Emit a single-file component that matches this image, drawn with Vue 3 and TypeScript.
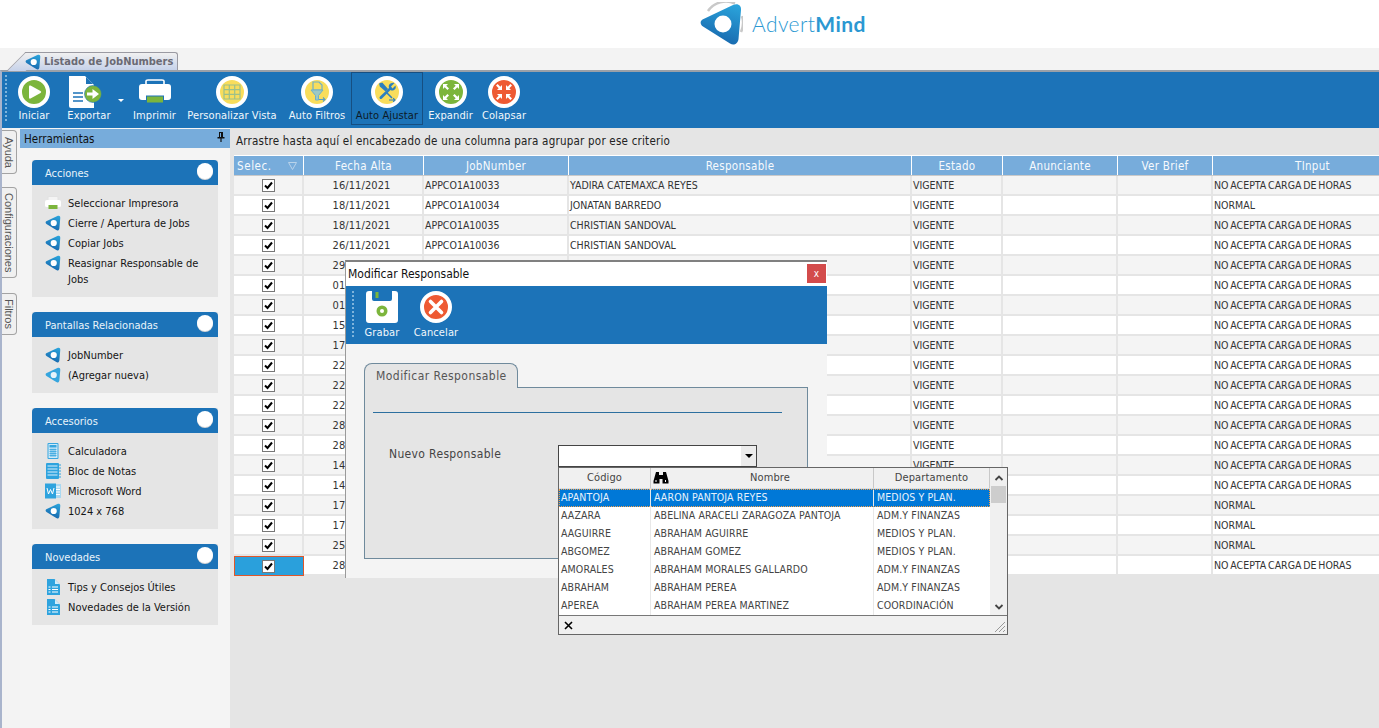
<script setup lang="ts">
interface Tool { label: string; icon: string; width: number; active?: boolean; caret?: boolean }
interface SideItem { label: string; icon: string }
interface Card { title: string; items: SideItem[] }
interface Row { date: string; job: string; resp: string; estado: string; input: string }

const tools: Tool[] = [
  { label: 'Iniciar', icon: 'play', width: 42 },
  { label: 'Exportar', icon: 'export', width: 72, caret: true },
  { label: 'Imprimir', icon: 'printer', width: 51 },
  { label: 'Personalizar Vista', icon: 'grid', width: 102 },
  { label: 'Auto Filtros', icon: 'filter', width: 66 },
  { label: 'Auto Ajustar', icon: 'tools', width: 72, active: true },
  { label: 'Expandir', icon: 'expand', width: 53 },
  { label: 'Colapsar', icon: 'collapse', width: 52 }
]

const cards: Card[] = [
  { title: 'Acciones', items: [
    { label: 'Seleccionar Impresora', icon: 'printer-s' },
    { label: 'Cierre / Apertura de Jobs', icon: 'logo' },
    { label: 'Copiar Jobs', icon: 'logo' },
    { label: 'Reasignar Responsable de Jobs', icon: 'logo' }
  ] },
  { title: 'Pantallas Relacionadas', items: [
    { label: 'JobNumber', icon: 'logo' },
    { label: '(Agregar nueva)', icon: 'logo-light' }
  ] },
  { title: 'Accesorios', items: [
    { label: 'Calculadora', icon: 'calc' },
    { label: 'Bloc de Notas', icon: 'notes' },
    { label: 'Microsoft Word', icon: 'word' },
    { label: '1024 x 768', icon: 'logo' }
  ] },
  { title: 'Novedades', items: [
    { label: 'Tips y Consejos Útiles', icon: 'doc' },
    { label: 'Novedades de la Versión', icon: 'doc' }
  ] }
]

const columns: { label: string; cls: string }[] = [
  { label: 'Fecha Alta', cls: 'c-date' },
  { label: 'JobNumber', cls: 'c-job' },
  { label: 'Responsable', cls: 'c-resp' },
  { label: 'Estado', cls: 'c-state' },
  { label: 'Anunciante', cls: 'c-adv' },
  { label: 'Ver Brief', cls: 'c-brief' },
  { label: 'TInput', cls: 'c-input' }
]

const NO = 'NO ACEPTA CARGA DE HORAS'
const dates = ['16/11/2021','18/11/2021','18/11/2021','26/11/2021','29/11/2021','01/12/2021','01/12/2021','15/12/2021','17/12/2021','22/12/2021','22/12/2021','22/12/2021','28/12/2021','28/12/2021','14/01/2022','14/01/2022','17/01/2022','17/01/2022','25/01/2022','28/01/2022']
const resp = ['YADIRA CATEMAXCA REYES','JONATAN BARREDO','CHRISTIAN SANDOVAL','CHRISTIAN SANDOVAL']
const jobs = ['APPCO1A10033','APPCO1A10034','APPCO1A10035','APPCO1A10036']
const normal = [1, 16, 17, 18]
const rows: Row[] = dates.map((date, i) => ({
  date,
  job: jobs[i] ?? '',
  resp: resp[i] ?? '',
  estado: i < 15 ? 'VIGENTE' : '',
  input: normal.includes(i) ? 'NORMAL' : NO
}))

const people: [string, string, string][] = [
  ['APANTOJA', 'AARON PANTOJA REYES', 'MEDIOS Y PLAN.'],
  ['AAZARA', 'ABELINA ARACELI ZARAGOZA PANTOJA', 'ADM.Y FINANZAS'],
  ['AAGUIRRE', 'ABRAHAM AGUIRRE', 'MEDIOS Y PLAN.'],
  ['ABGOMEZ', 'ABRAHAM GOMEZ', 'MEDIOS Y PLAN.'],
  ['AMORALES', 'ABRAHAM MORALES GALLARDO', 'ADM.Y FINANZAS'],
  ['ABRAHAM', 'ABRAHAM PEREA', 'ADM.Y FINANZAS'],
  ['APEREA', 'ABRAHAM PEREA MARTINEZ', 'COORDINACIÓN']
]
</script>

<template>
  <div class="app">
    <svg class="defs" width="0" height="0" aria-hidden="true">
      <defs>
        <linearGradient id="lg" x1="0.7" y1="0" x2="0.4" y2="1">
          <stop offset="0" stop-color="#2aa2da" />
          <stop offset="1" stop-color="#1766ac" />
        </linearGradient>
      </defs>
      <symbol id="logo" viewBox="0 0 44 44">
        <path d="M3.5 17.5 L34 3 C39 1 42.5 3.5 42 8 L39.5 37 C39 42 34.5 44 31 41.5 L4 24.5 C1 22.5 1 19 3.5 17.5Z" fill="url(#lg)" />
        <circle cx="24" cy="22" r="8.5" fill="#fff" />
      </symbol>
      <symbol id="logo-light" viewBox="0 0 44 44">
        <path d="M3.5 17.5 L34 3 C39 1 42.5 3.5 42 8 L39.5 37 C39 42 34.5 44 31 41.5 L4 24.5 C1 22.5 1 19 3.5 17.5Z" fill="#35a5de" />
        <circle cx="24" cy="22" r="8.5" fill="#e5f3fb" />
      </symbol>
      <symbol id="play" viewBox="0 0 32 32">
        <circle cx="16" cy="16" r="14" fill="#7cb53c" stroke="#fff" stroke-width="4" />
        <path d="M12.5 9.5 L22.5 15 Q24 16 22.5 17 L12.5 22.5 Q11 23 11 21.5 V10.5 Q11 9 12.5 9.5Z" fill="#fff" />
      </symbol>
      <symbol id="export" viewBox="0 0 34 32">
        <path d="M1 0 H17 L26 9 V32 H3 Q1 32 1 30Z" fill="#fff" />
        <path d="M18 1 V8 H25Z" fill="#1c73b8" />
        <path d="M5 17 H15 M5 21 H15 M5 25 H15" stroke="#1c73b8" stroke-width="1.3" />
        <circle cx="25" cy="18" r="8.5" fill="#7cb53c" stroke="#1c73b8" stroke-width="0.6" />
        <path d="M19 16.5 H24.5 V13 L31 18 L24.5 23 V19.5 H19Z" fill="#fff" />
      </symbol>
      <symbol id="printer" viewBox="0 0 32 32">
        <path d="M7 8 V5 Q7 4 9 4 H23 Q25 4 25 5 V8" fill="none" stroke="#fff" stroke-width="1.6" />
        <path d="M3 8 H29 Q32 8 32 11 V21 Q32 24 29 24 H3 Q0 24 0 21 V11 Q0 8 3 8Z" fill="#fff" />
        <rect x="7.5" y="20" width="17" height="7" fill="#7cb53c" stroke="#1c73b8" stroke-width="1" />
      </symbol>
      <symbol id="grid" viewBox="0 0 32 32">
        <circle cx="16" cy="16" r="14" fill="#f8dd5c" stroke="#fff" stroke-width="4" />
        <path d="M8 9 H24 V23 H8Z M8 13.7 H24 M8 18.3 H24 M13.3 9 V23 M18.7 9 V23" fill="none" stroke="#9cc08a" stroke-width="1.2" />
      </symbol>
      <symbol id="filter" viewBox="0 0 32 32">
        <circle cx="16" cy="16" r="14" fill="#f8dd5c" stroke="#fff" stroke-width="4" />
        <path d="M12 6 H18 L21 9 V14 H12Z" fill="none" stroke="#6fb0c8" stroke-width="1.2" />
        <path d="M10 14 H22 L17.5 19.5 V24 H14.5 V19.5Z" fill="#9cc9c4" stroke="#6fb0c8" stroke-width="1" />
        <path d="M18 23.5 H24 M22 21.5 L24 23.5 L22 25.5" fill="none" stroke="#5a9fc0" stroke-width="1.1" />
      </symbol>
      <symbol id="tools" viewBox="0 0 32 32">
        <circle cx="16" cy="16" r="14" fill="#f8dd5c" stroke="#fff" stroke-width="4" />
        <path d="M23.5 7 L20 10.5 L21.5 12.5 L24.5 9.5 Q25.5 12.5 23 14 Q21 15 19.5 14 L11 22.5 Q9.5 23.5 8.8 22.5 Q8 21.5 9 20.5 L18 12 Q17 9 19.5 7.5 Q21.5 6.5 23.5 7Z" fill="#2c7fbf" />
        <path d="M9 8 L11 7.5 L16 13 L14.5 14.5 L9.5 10Z M15 16 L21 22" stroke="#2c7fbf" stroke-width="1.6" fill="#2c7fbf" />
        <path d="M18 24 H24 M22.2 22.2 L24 24 L22.2 25.8" fill="none" stroke="#2c7fbf" stroke-width="1.1" />
      </symbol>
      <symbol id="expand" viewBox="0 0 32 32">
        <circle cx="16" cy="16" r="14" fill="#7cb53c" stroke="#fff" stroke-width="4" />
        <path d="M8 8 H13 L11.3 9.7 L14 12.4 L12.4 14 L9.7 11.3 L8 13Z M24 8 V13 L22.3 11.3 L19.6 14 L18 12.4 L20.7 9.7 L19 8Z M8 24 V19 L9.7 20.7 L12.4 18 L14 19.6 L11.3 22.3 L13 24Z M24 24 H19 L20.7 22.3 L18 19.6 L19.6 18 L22.3 20.7 L24 19Z" fill="#fff" />
      </symbol>
      <symbol id="collapse" viewBox="0 0 32 32">
        <circle cx="16" cy="16" r="14" fill="#ee5a33" stroke="#fff" stroke-width="4" />
        <path d="M14 14 H9 L10.7 12.3 L8 9.6 L9.6 8 L12.3 10.7 L14 9Z M18 14 V9 L19.7 10.7 L22.4 8 L24 9.6 L21.3 12.3 L23 14Z M14 18 V23 L12.3 21.3 L9.6 24 L8 22.4 L10.7 19.7 L9 18Z M18 18 H23 L21.3 19.7 L24 22.4 L22.4 24 L19.7 21.3 L18 23Z" fill="#fff" />
      </symbol>
      <symbol id="cancel" viewBox="0 0 32 32">
        <circle cx="16" cy="16" r="14" fill="#ee5a33" stroke="#fff" stroke-width="4" />
        <path d="M10.5 10.5 L21.5 21.5 M21.5 10.5 L10.5 21.5" stroke="#fff" stroke-width="3.6" stroke-linecap="round" />
      </symbol>
      <symbol id="save" viewBox="0 0 32 32">
        <path d="M3 0 H6 V8 Q6 10 8 10 H24 Q26 10 26 8 V0 H29 Q32 0 32 3 V29 Q32 32 29 32 H3 Q0 32 0 29 V3 Q0 0 3 0Z" fill="#fff" />
        <rect x="9.5" y="1" width="3" height="6" fill="#7cb53c" />
        <circle cx="16" cy="20" r="5.5" fill="#7cb53c" />
        <circle cx="16" cy="20" r="2" fill="#fff" />
      </symbol>
      <symbol id="printer-s" viewBox="0 0 16 16">
        <path d="M3 5 V2.5 Q3 1.5 4 1.5 H12 Q13 1.5 13 2.5 V5" fill="#f4f4f4" stroke="#e2e2e2" />
        <path d="M2 5 H14 Q16 5 16 7 V11 Q16 12 14 12 H2 Q0 12 0 11 V7 Q0 5 2 5Z" fill="#fff" />
        <rect x="3.5" y="10" width="9" height="4" fill="#7cb53c" />
      </symbol>
      <symbol id="calc" viewBox="0 0 16 16">
        <rect x="2.5" y="0" width="11" height="16" rx="1" fill="#37a6df" />
        <rect x="3.5" y="1" width="9" height="14" fill="#cfe9f7" />
        <rect x="4.5" y="2" width="7" height="2.5" fill="#37a6df" />
        <path d="M4.5 6.5 H11.5 M4.5 8.5 H11.5 M4.5 10.5 H11.5 M4.5 12.5 H11.5 M6 5.5 V14 M8 5.5 V14 M10 5.5 V14" stroke="#37a6df" stroke-width="0.8" />
      </symbol>
      <symbol id="notes" viewBox="0 0 16 16">
        <rect x="1" y="0" width="13" height="16" rx="1" fill="#2ea3de" />
        <path d="M2.5 3 H12.5 M2.5 6 H12.5 M2.5 9 H12.5 M2.5 12 H12.5" stroke="#d9f0fb" stroke-width="1.1" />
        <path d="M14 2 H16 M14 5 H16 M14 8 H16 M14 11 H16 M14 14 H16" stroke="#2ea3de" stroke-width="1" />
      </symbol>
      <symbol id="word" viewBox="0 0 16 16">
        <rect x="7" y="1" width="9" height="14" fill="#a9d8f1" />
        <path d="M9 4 H15 M9 6.5 H15 M9 9 H15 M9 11.5 H15" stroke="#fff" stroke-width="1" />
        <rect x="0" y="0.5" width="11" height="15" fill="#2ea3de" />
        <path d="M2 5 L3.5 11 L5.5 6.5 L7.5 11 L9 5" fill="none" stroke="#fff" stroke-width="1" />
      </symbol>
      <symbol id="doc" viewBox="0 0 16 16">
        <path d="M2 0 H9.5 L15 5.5 V16 H2Z" fill="#2ea3de" />
        <path d="M10 0.5 V5 H14.5Z" fill="#d4edfa" />
        <path d="M7 8 H13 M7 10.5 H13 M7 13 H13 M3.5 8 H5.5 M3.5 10.5 H5.5 M3.5 13 H5.5" stroke="#fff" stroke-width="1" />
      </symbol>
    </svg>

    <header class="brand">
      <svg class="brand-mark" viewBox="0 0 44 44" aria-hidden="true">
        <path d="M9 9 A22 22 0 0 1 36 1.5 M43 14 A22 22 0 0 1 42 30" fill="none" stroke="#c9c9c9" stroke-width="2.5" />
        <use href="#logo" />
      </svg>
      <span class="brand-name">Advert<b>Mind</b></span>
    </header>

    <div class="tabstrip">
      <div class="doc-tab">
        <svg class="doc-ic"><use href="#logo" /></svg>
        <span>Listado de JobNumbers</span>
      </div>
    </div>

    <div class="workspace">
      <div class="toolbar">
        <i class="grip"></i>
        <button
          v-for="t in tools"
          :key="t.label"
          class="tool"
          :class="{ active: t.active }"
          :style="{ width: t.width + 'px' }"
        >
          <span class="tool-ic">
            <svg class="ic32" :class="{ wide: t.icon === 'export' }"><use :href="'#' + t.icon" /></svg>
          </span>
          <i v-if="t.caret" class="caret"></i>
          <span class="tool-label" :class="{ shifted: t.caret }">{{ t.label }}</span>
        </button>
      </div>

      <div class="content">
        <nav class="sidetabs">
          <span class="vtab vt-a">Ayuda</span>
          <span class="vtab vt-b">Configuraciones</span>
          <span class="vtab vt-c">Filtros</span>
        </nav>

        <aside class="tools-panel">
          <div class="panel-head">
            <span>Herramientas</span>
            <svg class="pin" viewBox="0 0 8 10"><path d="M2 0 H6 V5 H7.5 V6.5 H4.6 V10 H3.4 V6.5 H0.5 V5 H2Z M3 1 V5 H4 V1Z" fill="#111" fill-rule="evenodd" /></svg>
          </div>
          <section v-for="c in cards" :key="c.title" class="card">
            <div class="card-head">
              <span class="card-title">{{ c.title }}</span>
              <i class="dot"></i>
            </div>
            <ul class="card-body">
              <li v-for="it in c.items" :key="it.label">
                <svg class="ic16"><use :href="'#' + it.icon" /></svg>
                <span>{{ it.label }}</span>
              </li>
            </ul>
          </section>
        </aside>

        <main class="grid-area">
          <div class="group-bar">Arrastre hasta aquí el encabezado de una columna para agrupar por ese criterio</div>
          <div class="grid-head">
            <div class="hc c-sel sel-head">Selec.<svg class="funnel" viewBox="0 0 9 8"><path d="M0.5 0.5 H8.5 L4.5 7.5Z" fill="none" stroke="#b9d3ea" /></svg></div>
            <div v-for="c in columns" :key="c.label" class="hc" :class="c.cls">{{ c.label }}</div>
          </div>
          <div v-for="(r, i) in rows" :key="i" class="row" :class="{ odd: i % 2 === 0 }">
            <div class="cell c-sel check-cell" :class="{ current: i === rows.length - 1 }">
              <span class="check"><svg viewBox="0 0 11 11"><path d="M2 5.5 L4.5 8 L9 2.5" fill="none" stroke="#000" stroke-width="2" /></svg></span>
            </div>
            <div class="cell c-date center">{{ r.date }}</div>
            <div class="cell c-job">{{ r.job }}</div>
            <div class="cell c-resp">{{ r.resp }}</div>
            <div class="cell c-state">{{ r.estado }}</div>
            <div class="cell c-adv"></div>
            <div class="cell c-brief"></div>
            <div class="cell c-input">{{ r.input }}</div>
          </div>
        </main>
      </div>
    </div>

    <div class="dialog">
      <div class="dlg-title">
        <span>Modificar Responsable</span>
        <button class="dlg-close">x</button>
      </div>
      <div class="dlg-toolbar">
        <i class="grip dlg-grip"></i>
        <button class="dlg-tool save-btn"><svg class="ic32"><use href="#save" /></svg><span>Grabar</span></button>
        <button class="dlg-tool"><svg class="ic32"><use href="#cancel" /></svg><span>Cancelar</span></button>
      </div>
      <div class="dlg-body">
        <div class="dlg-tab">Modificar Responsable</div>
        <div class="dlg-panel">
          <hr class="dlg-rule" />
          <div class="field">
            <label>Nuevo Responsable</label>
            <div class="combo"><span class="combo-btn"><i></i></span></div>
          </div>
        </div>
      </div>
    </div>

    <div class="popup">
      <div class="pop-main">
        <div class="pop-table">
          <div class="pop-head">
            <div class="p1">Código</div>
            <div class="p2 p2-head">
              <svg class="binoc" viewBox="0 0 16 13"><path d="M3 1 H6 V4 H10 V1 H13 L15.5 10 V12.5 H9.5 V8 H6.5 V12.5 H0.5 V10Z" fill="#000" /><path d="M3 9 V11 M12.5 9 V11" stroke="#fff" stroke-width="1" /></svg>
              <span>Nombre</span>
            </div>
            <div class="p3">Departamento</div>
          </div>
          <div v-for="(p, i) in people" :key="p[0]" class="pop-row" :class="{ picked: i === 0 }">
            <div class="p1">{{ p[0] }}</div>
            <div class="p2">{{ p[1] }}</div>
            <div class="p3">{{ p[2] }}</div>
          </div>
        </div>
        <div class="scroll">
          <svg viewBox="0 0 10 6" class="chev"><path d="M1.5 5 L5 1.5 L8.5 5" fill="none" stroke="#444" stroke-width="1.8" /></svg>
          <i class="thumb"></i>
          <svg viewBox="0 0 10 6" class="chev down"><path d="M1.5 1 L5 4.5 L8.5 1" fill="none" stroke="#444" stroke-width="1.8" /></svg>
        </div>
      </div>
      <div class="pop-foot">
        <svg class="pop-x" viewBox="0 0 9 9"><path d="M1 1 L8 8 M8 1 L1 8" stroke="#000" stroke-width="1.6" /></svg>
        <svg class="pop-grip" viewBox="0 0 12 12"><path d="M11 1 L1 11 M11 5 L5 11 M11 9 L9 11" stroke="#999" stroke-width="1" /></svg>
      </div>
    </div>
  </div>
</template>

<style>
html, body { margin: 0; height: 100%; overflow: hidden; }
</style>

<style scoped>
.app {
  position: relative;
  width: 1379px;
  height: 728px;
  overflow: hidden;
  display: flex;
  flex-direction: column;
  background: #e5e5e5;
  font-family: "DejaVu Sans", "Noto Sans", sans-serif;
  font-stretch: condensed;
  font-size: 11px;
  color: #222;
}
.defs { position: absolute; }
button { font: inherit; border: 0; background: none; padding: 0; color: inherit; }

.brand {
  height: 48px;
  flex: none;
  background: #fff;
  display: flex;
  align-items: flex-start;
  gap: 9px;
  padding-left: 699px;
  box-sizing: border-box;
}
.brand-mark { width: 44px; height: 44px; margin-top: 2px; }
.brand-name {
  font-family: "Lato", "Open Sans", sans-serif;
  font-stretch: normal;
  font-weight: 300;
  font-size: 21px;
  line-height: 47px;
  color: #2b98d2;
  letter-spacing: .4px;
}
.brand-name b { font-weight: 700; }

.tabstrip {
  height: 22px;
  flex: none;
  background: #f3f3f3;
  padding: 4px 0 0 25px;
  box-sizing: border-box;
}
.doc-tab {
  position: relative;
  width: 153px;
  height: 18px;
  display: flex;
  align-items: center;
  gap: 3px;
  box-sizing: border-box;
  border: 1px solid #9a9aa2;
  border-bottom: 0;
  border-left: 0;
  border-radius: 0 3px 0 0;
  background: linear-gradient(#f0f0f0, #c6d2ea);
  color: #6a6a74;
  font-weight: 700;
}
.doc-tab::before {
  content: "";
  position: absolute;
  left: -9px;
  top: -1px;
  width: 18px;
  height: 18px;
  z-index: 0;
  transform: skewX(-45deg);
  border-left: 1px solid #9a9aa2;
  border-top: 1px solid #9a9aa2;
  background: linear-gradient(#f0f0f0, #c6d2ea);
}
.doc-ic { width: 16px; height: 16px; position: relative; }
.doc-tab span { position: relative; }

.workspace {
  flex: 1;
  min-height: 0;
  display: flex;
  flex-direction: column;
  border-top: 2px solid #9aa0a8;
  border-left: 2px solid #a9b4cc;
}
.toolbar {
  height: 56px;
  flex: none;
  display: flex;
  align-items: flex-start;
  background: #1c73b8;
  padding-left: 11px;
  box-sizing: border-box;
  position: relative;
  gap: 1px;
}
.grip {
  position: absolute;
  left: 3px;
  top: 3px;
  width: 2px;
  height: 47px;
  background: repeating-linear-gradient(#7fb4dc 0 2px, transparent 2px 4px);
}
.tool {
  position: relative;
  height: 53px;
  flex: none;
  display: flex;
  flex-direction: column;
  align-items: center;
  color: #f2f7fb;
  box-sizing: border-box;
  border: 1px solid transparent;
}
.tool.active { border-color: #164f82; color: #0d1a26; }
.tool-ic { height: 37px; padding-top: 3px; box-sizing: border-box; display: flex; }
.tool-label { line-height: 16px; white-space: nowrap; letter-spacing: .1px; }
.tool-label.shifted { margin-right: 6px; }
.ic32 { width: 32px; height: 32px; display: block; }
.ic32.wide { width: 34px; margin-right: 15px; }
.caret {
  position: absolute;
  right: 3px;
  top: 26px;
  border: 3px solid transparent;
  border-top: 3px solid #fff;
  border-bottom: 0;
}

.content { flex: 1; min-height: 0; display: flex; }
.sidetabs {
  width: 18px;
  flex: none;
  background: #f3f3f3;
  display: flex;
  flex-direction: column;
  align-items: flex-start;
}
.vtab {
  writing-mode: vertical-rl;
  width: 15px;
  box-sizing: border-box;
  border: 1px solid #a3a3a3;
  border-left: 0;
  border-radius: 0 4px 4px 0;
  background: #f0f0f0;
  color: #555;
  text-align: center;
  line-height: 14px;
  font-family: "Liberation Sans", sans-serif;
  font-stretch: normal;
}
.vt-a { margin-top: 2px; height: 44px; }
.vt-b { margin-top: 13px; height: 91px; }
.vt-c { margin-top: 15px; height: 42px; }

.tools-panel {
  width: 210px;
  flex: none;
  margin-right: 4px;
  background: #f4f4f4;
  box-sizing: border-box;
}
.panel-head {
  height: 19px;
  margin: 1px 0 12px;
  background: #77acdb;
  color: #111;
  font-size: 11.5px;
  display: flex;
  align-items: center;
  justify-content: space-between;
  padding: 0 5px 0 4px;
}
.pin { width: 8px; height: 10px; margin-top: -3px; }
.card { margin: 0 12px 15px 12px; width: 186px; background: #e5e5e5; }
.card-head {
  height: 25px;
  background: #1c73b8;
  border-radius: 4px 4px 0 0;
  color: #eaf3fa;
  padding: 0 5px 0 13px;
  display: flex;
  align-items: center;
  justify-content: space-between;
}
.card-title { margin-top: 2px; }
.dot {
  width: 16px;
  height: 16px;
  border-radius: 50%;
  background: #fff;
  box-shadow: 0 1px 0 #d6d6d6;
  margin-top: -4px;
}
.card-body { list-style: none; margin: 0; padding: 8px 0 8px 13px; }
.card-body li {
  min-height: 20px;
  box-sizing: border-box;
  padding: 3px 0 1px;
  display: flex;
  align-items: flex-start;
  line-height: 16px;
  color: #151515;
}
.ic16 { width: 16px; height: 16px; flex: none; margin: -1px 7px 0 0; }

.grid-area { flex: 1; min-width: 0; background: #e5e5e5; overflow: hidden; }
.group-bar {
  height: 27px;
  line-height: 27px;
  padding-left: 2px;
  color: #222;
  font-size: 11.5px;
  letter-spacing: .22px;
}
.grid-head { display: flex; height: 21px; border-bottom: 1px solid #c9c9c9; box-sizing: border-box; border-top: 1px solid #fff; }
.hc {
  background: #77acdb;
  color: #f6fafd;
  text-align: center;
  line-height: 19px;
  padding-top: 1px;
  box-sizing: border-box;
  border-right: 1px solid #fff;
  font-size: 11.5px;
  letter-spacing: .3px;
}
.sel-head { text-align: left; padding-left: 3px; position: relative; letter-spacing: .6px; }
.funnel { position: absolute; right: 6px; top: 6px; width: 9px; height: 8px; }
.c-sel { width: 70px; flex: none; }
.c-date { width: 120px; flex: none; }
.c-job { width: 145px; flex: none; }
.c-resp { width: 343px; flex: none; }
.c-state { width: 91px; flex: none; }
.c-adv { width: 115px; flex: none; }
.c-brief { width: 95px; flex: none; }
.c-input { width: 200px; flex: none; }
.row { display: flex; height: 20px; background: #fff; }
.row.odd { background: #f4f4f4; }
.cell {
  box-sizing: border-box;
  height: 20px;
  line-height: 18px;
  padding-left: 1px;
  border-right: 2px solid #e5e5e5;
  border-bottom: 2px solid #e5e5e5;
  white-space: nowrap;
  overflow: hidden;
  font-size: 10.5px;
  color: #333;
}
.cell.c-input { word-spacing: -1.2px; }
.center { text-align: center; padding: 0 3px 0 0; font-size: 11px; letter-spacing: .1px; line-height: 20px; }
.check-cell { display: flex; justify-content: center; align-items: center; padding: 0; }
.check-cell.current { background: #2aa0dc; border: 1px solid #e0572a; padding-right: 1px; }
.check {
  width: 13px;
  height: 13px;
  box-sizing: border-box;
  border: 1px solid #777;
  background: #fff;
  display: block;
}
.check svg { display: block; width: 11px; height: 11px; }

.dialog {
  position: absolute;
  left: 345px;
  top: 260px;
  width: 482px;
  height: 318px;
  background: #f4f4f4;
  border-top: 2px solid #808080;
  border-left: 1px solid #9a9a9a;
  box-sizing: border-box;
  display: flex;
  flex-direction: column;
}
.dlg-title {
  height: 24px;
  flex: none;
  background: #fff;
  display: flex;
  align-items: center;
  justify-content: space-between;
  padding: 0 1px 1px 2px;
  box-sizing: border-box;
  font-size: 12px;
  color: #111;
}
.dlg-close {
  width: 19px;
  height: 19px;
  background: #d34b4b;
  color: #fff;
  font-size: 10px;
  line-height: 16px;
  text-align: center;
}
.dlg-toolbar {
  position: relative;
  height: 58px;
  flex: none;
  background: #1c73b8;
  display: flex;
  gap: 14px;
  padding: 5px 0 0 18px;
  box-sizing: border-box;
}
.dlg-grip { left: 6px; top: 5px; height: 46px; }
.dlg-tool { display: flex; flex-direction: column; align-items: center; color: #f2f7fb; gap: 0; width: 44px; }
.save-btn { width: 36px; }
.dlg-tool span { line-height: 16px; margin-top: 2px; white-space: nowrap; letter-spacing: .1px; }
.dlg-body { flex: 1; padding: 19px 19px 0 18px; }
.dlg-tab {
  width: 154px;
  height: 25px;
  margin-bottom: -1px;
  box-sizing: border-box;
  position: relative;
  z-index: 1;
  background: #e5e5e5;
  border: 1px solid #6f8a9c;
  border-bottom: 0;
  border-radius: 8px 8px 0 0;
  padding-left: 11px;
  line-height: 25px;
  color: #555;
  font-size: 12px;
  letter-spacing: .45px;
  white-space: nowrap;
}
.dlg-panel {
  height: 172px;
  box-sizing: border-box;
  background: #e5e5e5;
  border: 1px solid #6f8a9c;
  padding: 24px 25px 0 8px;
}
.dlg-rule { border: 0; border-top: 1px solid #2c6f9f; margin: 0; }
.field { display: flex; margin-top: 32px; padding-left: 16px; }
.field label { width: 169px; color: #444; font-size: 12px; line-height: 18px; letter-spacing: .35px; white-space: nowrap; }
.combo {
  width: 199px;
  height: 22px;
  box-sizing: border-box;
  border: 1px solid #444;
  background: #fff;
  display: flex;
  justify-content: flex-end;
}
.combo-btn {
  width: 15px;
  background: #ececec;
  display: flex;
  align-items: center;
  justify-content: center;
}
.combo-btn i { border: 4px solid transparent; border-top: 4px solid #000; border-bottom: 0; }

.popup {
  position: absolute;
  left: 558px;
  top: 467px;
  width: 450px;
  height: 168px;
  box-sizing: border-box;
  border: 1px solid #666;
  background: #fff;
  display: flex;
  flex-direction: column;
  font-size: 10.5px;
  letter-spacing: .12px;
  color: #444;
}
.pop-main { flex: none; height: 148px; display: flex; border-bottom: 1px solid #777; box-sizing: border-box; }
.pop-table { width: 431px; flex: none; }
.pop-head { display: flex; height: 21px; background: #f0f0f0; border-bottom: 1px solid #ddd; box-sizing: border-box; }
.pop-head > div { text-align: center; line-height: 19px; border-right: 1px solid #c8c8c8; padding: 0; font-size: 11px; }
.p1 { width: 92px; flex: none; padding-left: 2px; box-sizing: border-box; border-right: 1px solid #e8e8e8; }
.p2 { width: 223px; flex: none; padding-left: 3px; box-sizing: border-box; border-right: 1px solid #e8e8e8; }
.p3 { width: 116px; flex: none; padding-left: 3px; box-sizing: border-box; }
.pop-head > .p2-head { position: relative; padding-left: 16px; }
.binoc { position: absolute; left: 2px; top: 3px; width: 16px; height: 13px; }
.pop-row { display: flex; height: 18px; line-height: 17px; white-space: nowrap; }
.pop-row.picked { background: #0078d7; color: #e8f2fb; outline: 1px dotted #f5a04a; outline-offset: -1px; }
.scroll { flex: 1; background: #f0f0f0; display: flex; flex-direction: column; align-items: center; position: relative; }
.chev { width: 10px; height: 6px; margin-top: 7px; }
.chev.down { position: absolute; bottom: 5px; }
.thumb { display: block; width: 15px; height: 17px; background: #cdcdcd; margin-top: 5px; }
.pop-foot { flex: 1; background: #f0f0f0; display: flex; align-items: center; justify-content: space-between; padding: 0 1px 0 5px; }
.pop-x { width: 9px; height: 9px; }
.pop-grip { width: 12px; height: 12px; margin-top: 4px; }
</style>
